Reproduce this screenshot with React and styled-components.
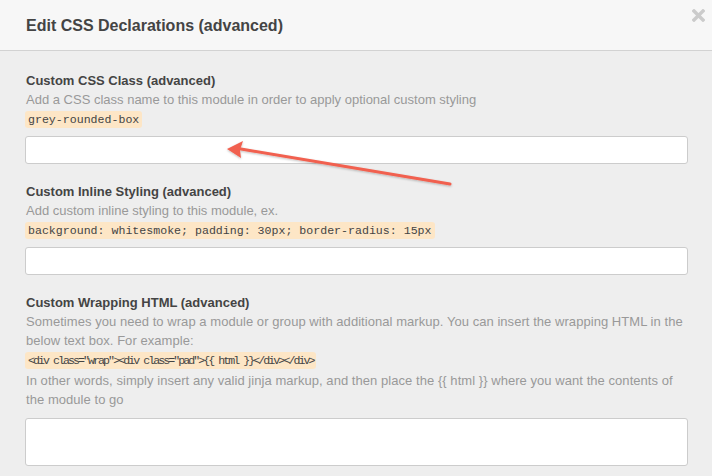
import React from "react";
import styled, { createGlobalStyle } from "styled-components";

const GlobalStyle = createGlobalStyle`
  html, body {
    margin: 0;
    padding: 0;
    background: #eeeeee;
  }
  body {
    font-family: "Liberation Sans", Arial, sans-serif;
  }
`;

const fields = [
  {
    label: "Custom CSS Class (advanced)",
    before: ["Add a CSS class name to this module in order to apply optional custom styling"],
    code: "grey-rounded-box",
    after: [],
  },
  {
    label: "Custom Inline Styling (advanced)",
    before: ["Add custom inline styling to this module, ex."],
    code: "background: whitesmoke; padding: 30px; border-radius: 15px",
    after: [],
  },
  {
    label: "Custom Wrapping HTML (advanced)",
    before: [
      "Sometimes you need to wrap a module or group with additional markup. You can insert the wrapping HTML in the below text box. For example:",
    ],
    code: '<div class="wrap"><div class="pad">{{ html }}</div></div>',
    after: [
      "In other words, simply insert any valid jinja markup, and then place the {{ html }} where you want the contents of the module to go",
    ],
    tall: true,
    narrow: true,
  },
];

const App = () => {
  return (
    <Modal>
      <GlobalStyle />
      <Header>
        <Title>Edit CSS Declarations (advanced)</Title>
        <Close width="13" height="13" viewBox="0 0 13 13">
          <path d="M2 2 L11 11 M11 2 L2 11" stroke="#cbcbcb" strokeWidth="3.4" strokeLinecap="square" />
        </Close>
      </Header>
      <Body>
        {fields.map((f, i) => (
          <Field key={i}>
            <Label>{f.label}</Label>
            {f.before.map((t, j) => (
              <Help key={j} narrow={f.narrow}>
                {t}
              </Help>
            ))}
            <CodeLine>
              <Code narrow={f.narrow}>{f.code}</Code>
            </CodeLine>
            {f.after.map((t, j) => (
              <Help key={j} narrow={f.narrow}>
                {t}
              </Help>
            ))}
            {f.tall ? <TextBox /> : <TextInput type="text" />}
          </Field>
        ))}
      </Body>
      <Arrow width="240" height="50" viewBox="0 0 240 50">
        <defs>
          <filter id="sh" x="-10%" y="-50%" width="120%" height="200%">
            <feDropShadow dx="0" dy="1" stdDeviation="0.8" floodColor="#000" floodOpacity="0.25" />
          </filter>
        </defs>
        <g filter="url(#sh)">
          <line x1="223" y1="39" x2="14" y2="4" stroke="#f1614f" strokeWidth="3" strokeLinecap="round" />
          <path d="M0 4 L16 -4 L13 5 L14 13 Z" fill="#f1614f" />
        </g>
      </Arrow>
    </Modal>
  );
};

export default App;

const Modal = styled.div`
  position: relative;
  width: 712px;
  height: 476px;
  overflow: hidden;
  background: #eeeeee;
`;

const Header = styled.div`
  display: flex;
  align-items: center;
  justify-content: space-between;
  height: 51px;
  padding: 0 7px 0 26px;
  box-sizing: border-box;
  background: #f7f7f7;
  border-bottom: 1px solid #d2d2d2;
`;

const Title = styled.h1`
  margin: 0;
  margin-top: 2px;
  font-size: 16px;
  font-weight: bold;
  color: #444444;
`;

const Close = styled.svg`
  align-self: flex-start;
  margin-top: 9px;
`;

const Body = styled.div`
  display: flex;
  flex-direction: column;
  gap: 18px;
  padding: 20px 24px 0 25px;
`;

const Field = styled.div`
  display: flex;
  flex-direction: column;
`;

const Label = styled.div`
  padding-left: 1px;
  font-size: 13px;
  font-weight: bold;
  line-height: 19px;
  color: #444444;
`;

const Help = styled.div`
  padding-left: 1px;
  font-size: 13px;
  line-height: 19px;
  color: #999999;
  letter-spacing: ${(p) => (p.narrow ? "0.05px" : "0")};
`;

const CodeLine = styled.div`
  height: 21px;
  display: flex;
  align-items: center;
`;

const Code = styled.code`
  display: inline-block;
  padding: 0 3px;
  height: 17px;
  line-height: 17px;
  border-radius: 3px;
  background: #fde6c6;
  color: #444444;
  font-family: "Liberation Mono", "DejaVu Sans Mono", monospace;
  font-size: 11.6px;
  letter-spacing: ${(p) => (p.narrow ? "-1.95px" : "0")};
`;

const TextInput = styled.input`
  margin-top: 6px;
  height: 28px;
  box-sizing: border-box;
  width: 100%;
  border: 1px solid #cccccc;
  border-radius: 3px;
  background: #ffffff;
  outline: none;
`;

const TextBox = styled.textarea`
  margin-top: 9px;
  height: 48px;
  box-sizing: border-box;
  width: 100%;
  border: 1px solid #cccccc;
  border-radius: 3px;
  background: #ffffff;
  resize: none;
  outline: none;
`;

const Arrow = styled.svg`
  position: absolute;
  left: 227px;
  top: 145px;
  overflow: visible;
`;
